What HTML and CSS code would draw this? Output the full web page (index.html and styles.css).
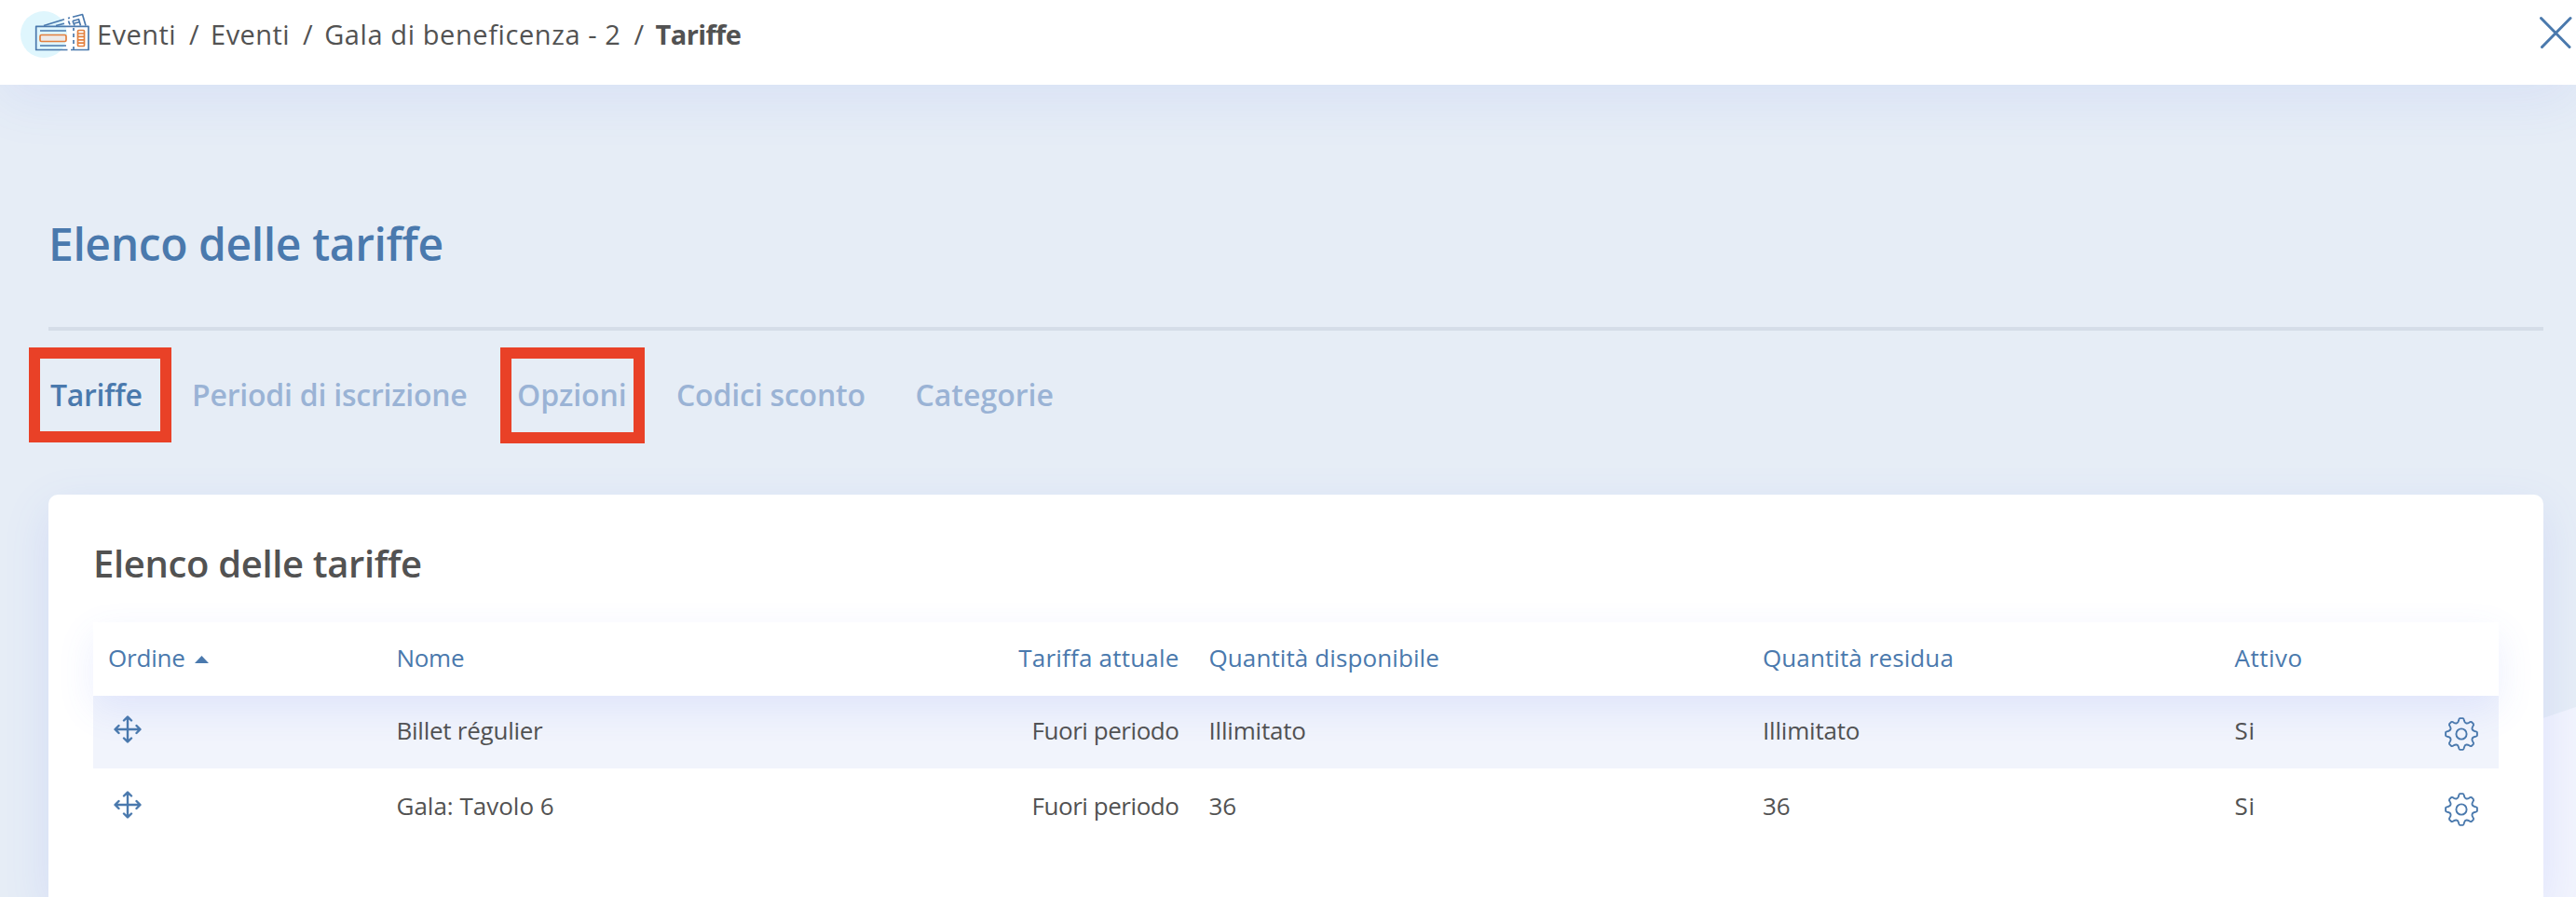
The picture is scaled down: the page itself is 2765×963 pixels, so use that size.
FILE: index.html
```
<!DOCTYPE html>
<html lang="it">
<head>
<meta charset="utf-8">
<title>Tariffe</title>
<link rel="stylesheet" href="styles.css">
</head>
<body>
<svg class="defs" width="0" height="0">
  <symbol id="move" viewBox="0 0 30 30"><path d="M15 2v26M2 15h26M11 5.500 15 1.500l4 4M11 24.500l4 4 4-4M5.500 11l-4 4 4 4M24.500 11l4 4-4 4"/></symbol>
  <symbol id="gear" viewBox="-19 -19 38 38"><circle r="5.600"/><path d="M-3-14.200Q-2.500-16.900-1.500-16.900H1.500Q2.500-16.900 3-14.200Q3.600-11.800 5.200-11.500Q6.800-11.200 8.300-12.300Q9.800-13.500 10.800-12.900L12.900-10.800Q13.500-9.800 12.300-8.300Q11.200-6.800 11.500-5.200Q11.800-3.600 14.200-3Q16.900-2.500 16.900-1.500V1.500Q16.900 2.500 14.200 3Q11.800 3.600 11.500 5.200Q11.200 6.800 12.300 8.300Q13.500 9.800 12.900 10.800L10.800 12.900Q9.800 13.500 8.300 12.300Q6.800 11.200 5.200 11.500Q3.600 11.800 3 14.200Q2.500 16.900 1.500 16.900H-1.500Q-2.500 16.900-3 14.200Q-3.600 11.800-5.200 11.500Q-6.800 11.200-8.300 12.300Q-9.800 13.500-10.800 12.900L-12.900 10.800Q-13.500 9.800-12.300 8.300Q-11.200 6.800-11.500 5.200Q-11.800 3.600-14.200 3Q-16.900 2.500-16.900 1.500V-1.500Q-16.900-2.500-14.200-3Q-11.800-3.600-11.500-5.200Q-11.200-6.800-12.300-8.300Q-13.500-9.800-12.900-10.800L-10.800-12.900Q-9.800-13.500-8.300-12.300Q-6.800-11.200-5.200-11.500Q-3.600-11.800-3-14.200Z"/></symbol>
</svg>
<header class="topbar">
  <svg class="tickets" viewBox="20 10 80 54" width="80" height="54">
    <circle cx="47" cy="37" r="25" fill="#dff6fd"/>
    <g fill="none" stroke="#4a79ad" stroke-width="1.700" stroke-linejoin="round">
      <path d="M47 27.500 69 20.800M73 19.600l2-.6M78 18.300l10.500-2.800L92 27.500M60 27.500l9-2.300M73.500 22.500l1.500 4M78 22.500l6.500-1.800 2 6.800M80 27.500l-2-5M80 25l5-1.300"/>
      <path fill="#fff" stroke="none" d="M39 28.500h56v25H39z"/><path fill="#dff6fd" stroke="none" d="M39 28.500h31.500a25 25 0 0 1-4.500 25H39z"/>
      <path d="M72.500 53.500H38.700v-25.200H95v25.200H76M43 33h28M43 49h28"/>
      <path d="M79 30v3M79 36v4M79 43v4M79 50v3"/>
    </g>
    <g fill="#eeeae8" stroke="#e3803f" stroke-width="1.700"><rect x="43" y="37.500" width="28" height="7" rx="1.500"/><rect x="83.500" y="32.500" width="7" height="17" rx="1" fill="#fff"/><path d="M83.500 36h7M83.500 39.400h7M83.500 42.800h7M83.500 46.200h7"/></g>
  </svg>
  <nav class="crumbs">
    <span class="crumb-event">Eventi</span><i>/</i><span class="crumb-event">Eventi</span><i>/</i><span class="crumb-gala">Gala di beneficenza - 2</span><i>/</i><b class="crumb-here">Tariffe</b>
  </nav>
  <svg class="close" viewBox="0 0 36 36" width="36" height="36"><path d="M2.500 2.500 33 33.500M34 2.500 3.500 33.500"/></svg>
</header>
<main class="page">
  <div class="backdrop"></div>
  <h1>Elenco delle tariffe</h1>
  <nav class="tabs">
    <a class="tab active tab-rates">Tariffe<em class="mark mark-rates"></em></a>
    <a class="tab tab-periods">Periodi di iscrizione</a>
    <a class="tab tab-options">Opzioni<em class="mark mark-options"></em></a>
    <a class="tab tab-codes">Codici sconto</a>
    <a class="tab">Categorie</a>
  </nav>
  <section class="card">
    <h2>Elenco delle tariffe</h2>
    <div class="table">
      <div class="row head">
        <div><span class="head-order">Ordine</span><svg class="sort" viewBox="0 0 15 8" width="15" height="8"><path d="M7.500 0 15 8H0z"/></svg></div>
        <div class="head-name">Nome</div>
        <div class="right head-rate">Tariffa attuale</div>
        <div class="head-qty">Quantità disponibile</div>
        <div class="head-qty">Quantità residua</div>
        <div class="head-active">Attivo</div>
        <div></div>
      </div>
      <div class="row shaded">
        <div><svg class="move"><use href="#move"/></svg></div>
        <div class="name-ticket">Billet régulier</div>
        <div class="right period">Fuori periodo</div>
        <div class="unlimited">Illimitato</div>
        <div class="unlimited">Illimitato</div>
        <div class="state">Si</div>
        <div><svg class="gear"><use href="#gear"/></svg></div>
      </div>
      <div class="row">
        <div><svg class="move"><use href="#move"/></svg></div>
        <div>Gala: Tavolo 6</div>
        <div class="right period">Fuori periodo</div>
        <div>36</div>
        <div>36</div>
        <div class="state">Si</div>
        <div><svg class="gear"><use href="#gear"/></svg></div>
      </div>
    </div>
  </section>
</main>
</body>
</html>
```

FILE: styles.css
```
* { box-sizing: border-box; }
body { margin: 0; height: 963px; overflow: hidden; background: #e6edf6; color: #525252; font: 26px/36px "Open Sans", "Noto Sans", sans-serif; }
.defs { position: absolute; }
h1, h2 { margin: 0; font-weight: 600; }

.topbar { position: relative; z-index: 2; display: flex; align-items: center; height: 91px; padding: 0 3px 17px 20px; background: #fff; box-shadow: 0 16px 60px rgba(83, 107, 247, .09); }
.tickets { flex: none; }
.crumbs { display: flex; margin-left: 4px; font-size: 29px; line-height: 40px; white-space: nowrap; }
.crumbs i { margin: 0 12.400px 0 14px; font-style: normal; }
.crumb-event { letter-spacing: .45px; }
.crumb-gala { letter-spacing: .6px; }
.crumb-here { font-weight: 700; letter-spacing: -.6px; }
.close { margin: -4px 1px 0 auto; fill: none; stroke: #4a79ad; stroke-width: 3; stroke-linecap: round; }

.page { position: relative; height: 872px; padding: 140px 35px 0 52px; }
.backdrop { position: absolute; right: 0; bottom: 0; width: 65px; height: 204px; background: #f2f4fd; clip-path: polygon(0 22px, 100% 0, 100% 100%, 0 100%); }
h1 { height: 124px; border-bottom: 4px solid #d5dde8; color: #4a79ad; font-size: 48px; line-height: 62px; letter-spacing: -.4px; }
.tabs { display: flex; gap: 53.500px; height: 176px; padding: 48px 0 0 2px; font-size: 32px; font-weight: 600; line-height: 41px; }
.tab { position: relative; height: 40px; color: #9ab3d5; white-space: nowrap; }
.active { color: #4a79ad; }
.tab-rates { letter-spacing: -.35px; }
.tab-periods { letter-spacing: -.23px; }
.tab-options { letter-spacing: -.1px; }
.tab-codes { letter-spacing: -.18px; }
.mark { position: absolute; border: 12px solid #e94127; }
.mark-rates { left: -23px; top: -30px; width: 153px; height: 102px; }
.mark-options { left: -18px; top: -30px; width: 155px; height: 103px; }

.card { position: relative; height: 432px; padding: 49px 48px 0; background: #fff; border-radius: 10px 10px 0 0; box-shadow: 0 16px 50px rgba(83, 107, 247, .13); }
h2 { margin-bottom: 38px; font-size: 40px; line-height: 50px; letter-spacing: -.35px; }
.row { display: grid; grid-template-columns: 309.500px 500px 372px 594.500px 506.500px 223.500px 1fr; height: 78px; }
.row > div { padding: 19px 16px 0; white-space: nowrap; }
.row > .right { text-align: right; }
.head { position: relative; height: 79px; background: #fff; color: #4a79ad; font-weight: 500; box-shadow: 0 14px 40px rgba(83, 107, 247, .11); }
.head > div { padding-top: 20px; }
.head-order { letter-spacing: -.2px; }
.head-name { letter-spacing: -.3px; }
.head-rate { letter-spacing: .2px; }
.head-qty { letter-spacing: .1px; }
.head-active { letter-spacing: .5px; }
.name-ticket { letter-spacing: -.25px; }
.period { letter-spacing: -.45px; }
.unlimited { letter-spacing: -.2px; }
.state { letter-spacing: .7px; }
.shaded { background: #f1f4fc; }
.row:last-child > div { padding-top: 22px; }
.sort { margin-left: 10px; vertical-align: 4px; fill: #4a79ad; }
.move { display: block; width: 30px; height: 30px; margin: 2px 0 0 6px; fill: none; stroke: #4a79ad; stroke-width: 2.400; stroke-linecap: round; stroke-linejoin: round; }
.gear { display: block; width: 38px; height: 38px; margin: 3px 0 0 1px; fill: none; stroke: #4a79ad; stroke-width: 1.900; }
```
